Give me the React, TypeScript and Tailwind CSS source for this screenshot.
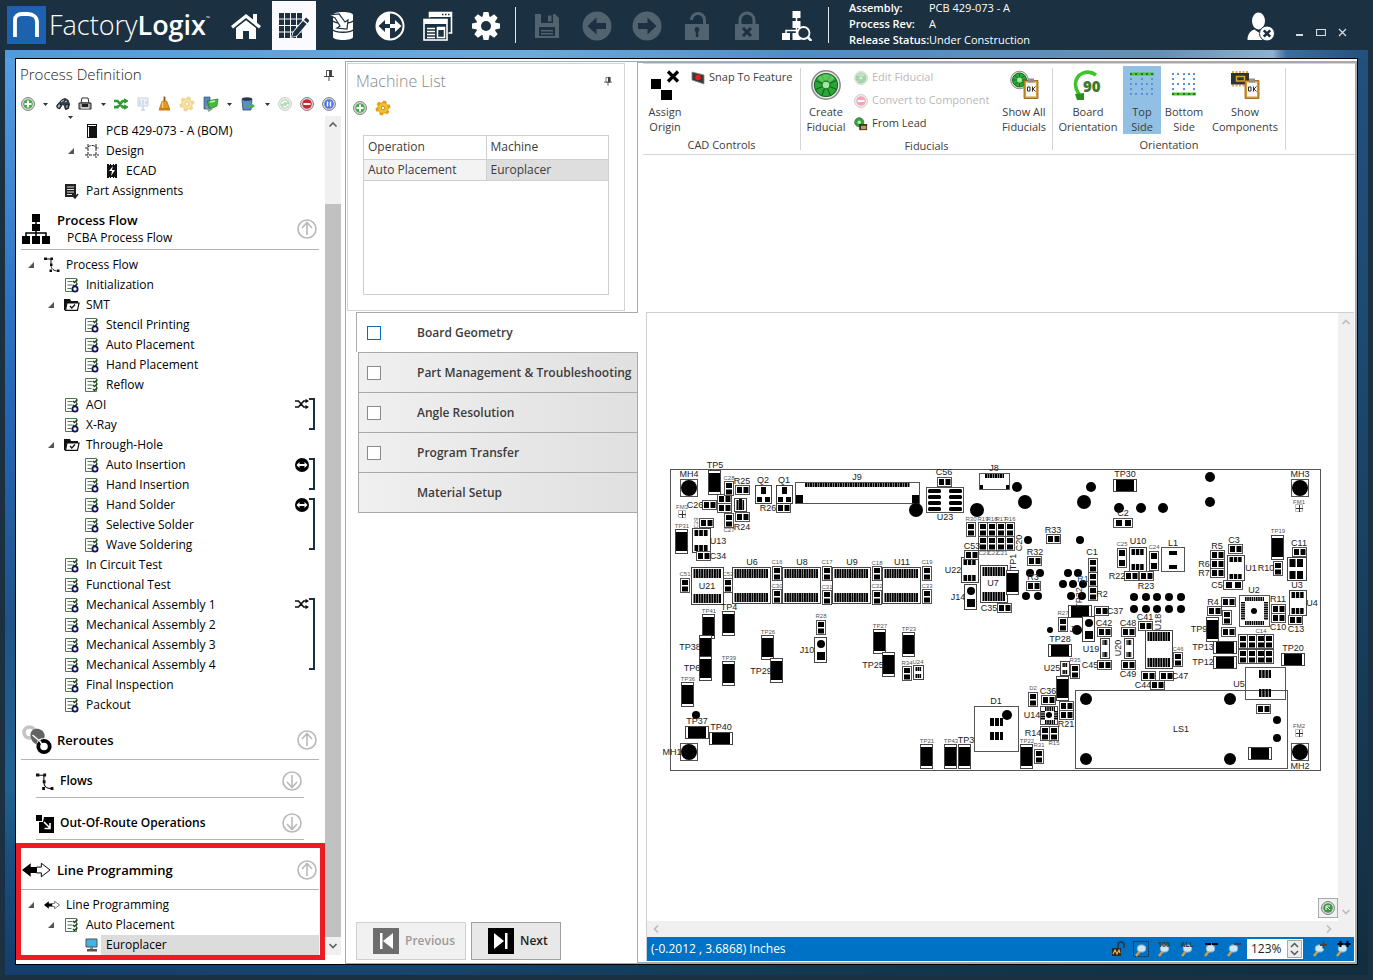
import { useState } from "react";
import type { ReactNode } from "react";

/* ---------- top bar icons ---------- */

function HomeIcon() {
  return (
    <svg viewBox="0 0 30 30" className="w-[30px] h-[30px]" fill="#fff">
      <path d="M15 3 0 15l2 2.400L15 7l13 10.400L30 15l-4-3.200V3h-4v5.600z" />
      <path d="M5 17 15 9.200 25 17v11h-7v-8h-6v8H5z" />
    </svg>
  );
}

function GridPenIcon() {
  return (
    <svg viewBox="0 0 30 28" className="w-[30px] h-[28px]" fill="#1b3040">
      {[0, 1, 2, 3].map((r) =>
        [0, 1, 2, 3].map((c) => <rect key={`${r}-${c}`} x={c * 6} y={1 + r * 6.5} width="5" height="5.500" />)
      )}
      <path d="m12 26 1.500-6L26 5l5 4-12.500 15z" fill="#fbfaff" />
      <path d="m13 25 1.500-5L24 9l3.500 3L18 23.500zM25 8l2-2.500 3.500 3-2 2.500z" />
    </svg>
  );
}

function DatabaseIcon() {
  return (
    <svg viewBox="0 0 26 30" className="w-[26px] h-[30px]">
      <path d="M4 4c0-4 20-4 20 0v22c0 4-20 4-20 0z" fill="#fff" />
      <path d="M4 10c3 3 17 3 20 0M4 19c3 3 17 3 20 0" stroke="#1b3040" strokeWidth="1.500" fill="none" />
      <path d="M0 4l10-1 6 8 3-2-1 9-10-1 3-2-5-8z" fill="#fff" stroke="#1b3040" strokeWidth="1.200" />
    </svg>
  );
}

function SwapIcon() {
  return (
    <svg viewBox="0 0 30 30" className="w-[30px] h-[30px]">
      <circle cx="15" cy="15" r="13.500" fill="none" stroke="#fff" strokeWidth="2" />
      <path d="M15 1.500a13.500 13.500 0 0 0 0 27z" fill="#fff" />
      <path d="m3.500 15 6.500-6v4h5v4h-5v4z" fill="#1b3040" />
      <path d="m26.500 15-6.500-6v4h-5v4h5v4z" fill="#fff" />
    </svg>
  );
}

function WindowsIcon() {
  return (
    <svg viewBox="0 0 30 30" className="w-[30px] h-[30px]" fill="none" stroke="#fff">
      <path d="M6.500 6.500v-5h22V22h-3" strokeWidth="1.600" />
      <path d="M6.500 4h22" strokeWidth="4" />
      <path d="M19 3.500h1.500m1.500 0h1.500m1.500 0h1.500" strokeWidth="1.500" stroke="#1b3040" />
      <rect x="1" y="8.500" width="23" height="20.500" strokeWidth="1.600" />
      <path d="M1 11h23" strokeWidth="4" />
      <path d="M4 17.500h8M4 20.500h8M4 23.500h8M4 26.500h8" strokeWidth="1.500" />
      <path d="M14.500 16.500h7v10h-7z" strokeWidth="1.500" />
      <path d="M14 17.500h8" strokeWidth="3" />
    </svg>
  );
}

function GearIcon() {
  return (
    <svg viewBox="0 0 30 30" className="w-[30px] h-[30px]">
      {[0, 45, 90, 135].map((a) => (
        <path key={a} d="M12.500 1h5l1 5v18l-1 5h-5l-1-5V6z" fill="#fff" transform={`rotate(${a} 15 15)`} />
      ))}
      <circle cx="15" cy="15" r="10" fill="#fff" />
      <circle cx="15" cy="15" r="5" fill="#1b3040" />
    </svg>
  );
}

function SaveIcon() {
  return (
    <svg viewBox="0 0 26 26" className="w-[26px] h-[26px]">
      <path d="M1 1h20l4 4v20H1z" fill="#526370" />
      <path d="M7 1h12v9H7zM5 14h16v9H5z" fill="#1b3040" />
      <path d="M14 2.500h3.500v6H14zM7 17h12v1.500H7zM7 20h12v1.500H7z" fill="#526370" />
    </svg>
  );
}

function RoundArrowIcon({ flip }: { flip?: boolean }) {
  return (
    <svg viewBox="0 0 30 30" className="w-[30px] h-[30px]">
      <circle cx="15" cy="15" r="14.500" fill="#526370" />
      <path
        d="m5.500 15 9-8.500V12H24v6h-9.500v5.500z"
        fill="#1b3040"
        transform={flip ? "rotate(180 15 15)" : undefined}
      />
    </svg>
  );
}

function PadlockIcon({ open }: { open?: boolean }) {
  return (
    <svg viewBox="0 0 26 30" className="w-[26px] h-[30px]">
      <path
        d={open ? "M7.500 9a6.500 6.500 0 0 1 13 0v5" : "M6 14V9a7 7 0 0 1 14 0v5"}
        stroke="#526370"
        strokeWidth="3"
        fill="none"
      />
      <path d="M1 13h24v16H1z" fill="#526370" />
      {open ? (
        <path d="M13 16a2.500 2.500 0 0 1 1.200 4.700V26h-2.400v-5.300A2.500 2.500 0 0 1 13 16z" fill="#1b3040" />
      ) : (
        <path d="m9 17 8 8m0-8-8 8" stroke="#1b3040" strokeWidth="3" />
      )}
    </svg>
  );
}

function SitemapSearchIcon() {
  return (
    <svg viewBox="0 0 30 30" className="w-[30px] h-[30px]">
      <path d="M10.500 0h8v7h-8zM10.500 10h8v7h-8zM0 22h8v7H0zM10.500 22h8v7h-8z" fill="#fff" />
      <path d="M14.500 5v18M4 23v-3.500h16" stroke="#fff" strokeWidth="1.500" fill="none" />
      <circle cx="21.500" cy="22" r="6" fill="#1b3040" stroke="#fff" strokeWidth="1.800" />
      <path d="m25.500 26 4 4" stroke="#fff" strokeWidth="2.500" />
    </svg>
  );
}

function UserIcon() {
  return (
    <svg viewBox="0 0 28 30" className="w-[28px] h-[30px]">
      <ellipse cx="11.500" cy="9" rx="6.500" ry="8.500" fill="#fff" />
      <path d="M.5 28c0-6 3-9.500 7-10.500l4 3 4-3c4 1 7 4 7 10.500z" fill="#fff" />
      <circle cx="20" cy="21.500" r="7.500" fill="#fff" stroke="#1b3040" strokeWidth="1" />
      <path d="m16.800 18.300 6.400 6.400m0-6.400-6.400 6.400" stroke="#1b3040" strokeWidth="2.600" />
    </svg>
  );
}

/* ---------- small coloured icons ---------- */

function Badge({ color, children, faded }: { color: string; children: ReactNode; faded?: boolean }) {
  return (
    <svg viewBox="0 0 14 14" className="w-[14px] h-[14px] shrink-0" opacity={faded ? 0.4 : 1}>
      <circle cx="7" cy="7" r="6.400" fill="#e4e4e4" stroke="#777" strokeWidth="1" />
      <circle cx="7" cy="7" r="4.800" fill={color} />
      {children}
    </svg>
  );
}

function AddBadge() {
  return (
    <Badge color="#4aab4e">
      <path d="M7 3.500v7M3.500 7h7" stroke="#fff" strokeWidth="2" />
    </Badge>
  );
}

function BinocularsIcon() {
  return (
    <svg viewBox="0 0 14 14" className="w-[14px] h-[14px]">
      <path d="M1 8 6 2.500 9 1.500l3 1.500 1.500 4-1 4.500-3 1-1-4-2-1-3 4.500L1 10z" fill="#39424a" stroke="#1b1b1b" strokeWidth="0.800" />
      <ellipse cx="3" cy="9" rx="1.800" ry="2.300" fill="#8fb0c6" stroke="#222" transform="rotate(30 3 9)" />
      <ellipse cx="10.800" cy="9.500" rx="1.600" ry="2.300" fill="#6d93ad" stroke="#222" transform="rotate(20 10.800 9.500)" />
      <path d="m5 5 3-2M9 5l2-1" stroke="#b8cbd8" />
    </svg>
  );
}

function PrinterIcon() {
  return (
    <svg viewBox="0 0 14 14" className="w-[14px] h-[14px]">
      <path d="M4 1h6l1 5H3z" fill="#fff" stroke="#333" />
      <path d="M1 6h12v6H1z" fill="#a9a9ae" stroke="#222" />
      <path d="M4 7h6v3H4z" fill="#222" />
      <path d="M3 11h8" stroke="#fff" />
    </svg>
  );
}

function ShuffleIcon({ color = "#111", wide }: { color?: string; wide?: boolean }) {
  return (
    <svg viewBox="0 0 16 12" className="w-[14px] h-[12px]" fill="none" stroke={color} strokeWidth={wide ? 3 : 1.8}>
      <path d="M0 2.500h4l6 7h3M0 9.500h4l6-7h3" />
      <path d="m12 0 4 2.500L12 5zM12 7l4 2.500-4 2.500z" fill={color} stroke={wide ? color : "none"} strokeWidth="1" />
    </svg>
  );
}

function BoardIcon() {
  return (
    <svg viewBox="0 0 14 14" className="w-[14px] h-[14px]" opacity="0.500">
      <path d="M2 1h10v8H2z" fill="#dfe8f4" stroke="#8fa6c4" />
      <path d="M4 3v5M7 3v5M10 4v3M7 9v4M5 13h4" stroke="#6d8fbb" />
    </svg>
  );
}

function BellIcon() {
  return (
    <svg viewBox="0 0 14 16" className="w-[13px] h-[16px]">
      <path d="M6 0h2v5H6z" fill="#8a5a16" />
      <path d="M4.500 5h5l1.500 4 1.500 4h-11L3 9z" fill="#e09a1c" stroke="#a4600a" strokeWidth="0.700" />
      <path d="M1 13h12v2H1z" fill="#c77d12" />
      <path d="M5 6v6" stroke="#fbe08a" />
    </svg>
  );
}

function CogIcon({ faded }: { faded?: boolean }) {
  return (
    <svg viewBox="0 0 16 16" className="w-4 h-4" opacity={faded ? 0.45 : 1}>
      {[0, 60, 120].map((a) => (
        <rect key={a} x="6" y="0.500" width="4" height="15" rx="1" fill="#e5a41a" transform={`rotate(${a + 15} 8 8)`} />
      ))}
      <circle cx="8" cy="8" r="5.400" fill="#f6c02b" stroke="#c98b10" strokeWidth="0.600" />
      <circle cx="8" cy="8" r="1.800" fill="#fff" stroke="#b57b0c" strokeWidth="0.800" />
    </svg>
  );
}

function ServerSyncIcon() {
  return (
    <svg viewBox="0 0 16 16" className="w-4 h-4">
      <path d="M1 1h6v12H1z" fill="#5d86ba" stroke="#35557f" strokeWidth="0.700" />
      <path d="m4 5 11-2-1 7-7 3z" fill="#46b93f" stroke="#1e7a1b" strokeWidth="0.700" />
      <path d="m7 6 5-1" stroke="#c9f2c4" strokeWidth="1.500" />
      <path d="M3 10l3 5 4-3" fill="none" stroke="#999" strokeWidth="1.500" />
    </svg>
  );
}

function BinIcon() {
  return (
    <svg viewBox="0 0 16 16" className="w-4 h-4">
      <path d="M2 3h10l-1 11H3z" fill="#5b8fc4" stroke="#2d4a68" strokeWidth="0.800" />
      <ellipse cx="7" cy="3" rx="5" ry="1.800" fill="#27394a" />
      <path d="M7 9h4V7l4 3-4 3v-2H7z" fill="#41b83b" />
    </svg>
  );
}

function PinIcon({ className = "w-[10px] h-[12px]" }: { className?: string }) {
  return (
    <svg viewBox="0 0 10 12" className={className}>
      <path d="M2.500 1.500h5v6h-5z" fill="#fff" stroke="#555" />
      <path d="M5 1h3v6H5zM0 7h10v1H0zM4.500 8h1v4h-1z" fill="#444" />
    </svg>
  );
}

/* ---------- tree icons ---------- */

function OperationIcon({ gear = true }: { gear?: boolean }) {
  return (
    <svg viewBox="0 0 16 16" className="w-4 h-4">
      <path d="M1.500 1.500h11v13h-11z" fill="#fff" stroke="#4d7a4d" />
      <path d="M3.500 4.500h5M3.500 8h5M3.500 11.500h4" stroke="#4d7a4d" />
      <path d="m9 4 1.500 1.500 3-3M9 8l1.500 1.500 3-3" stroke="#1d4420" strokeWidth="1.500" fill="none" />
      {gear ? (
        <circle cx="11" cy="12" r="2.600" fill="#fff" stroke="#14145e" strokeWidth="1.800" />
      ) : (
        <path d="m9 12 1.500 1.500 3-3" stroke="#1d4420" strokeWidth="1.500" fill="none" />
      )}
    </svg>
  );
}

function FolderIcon() {
  return (
    <svg viewBox="0 0 16 16" className="w-4 h-4">
      <path d="M0 2h6l1 2h7v2H3L1.500 13H0z" fill="#111" />
      <path d="M3 6h12l-1.500 7.300h-12z" fill="#fff" stroke="#111" strokeWidth="1.200" />
      <path d="m6 9 1.800 2 3.200-3.500" stroke="#111" fill="none" strokeWidth="1.300" />
    </svg>
  );
}

function FlowIcon({ className = "w-4 h-4" }: { className?: string }) {
  return (
    <svg viewBox="0 0 16 16" className={className} fill="#111">
      <path d="M1 2h6v6c0 4 3 6 7 6" fill="none" stroke="#111" />
      <path d="M0 .5h3v2.500H0zM6.500 .5H9v2.500H6.500zM6 6.500h2.500V9H6zM5.500 12.500H8V15H5.500zM13 12.500h2.500V15H13z" />
    </svg>
  );
}

function BookIcon() {
  return (
    <svg viewBox="0 0 16 16" className="w-4 h-4">
      <path d="M3 1h10v14H3z" fill="#111" />
      <path d="M4 2.500h8M4.500 4v10" stroke="#fff" />
    </svg>
  );
}

function DesignIcon() {
  return (
    <svg viewBox="0 0 16 16" className="w-4 h-4" fill="none" stroke="#222">
      <path d="M4 1v14M12 1v14M1 12h14M1 5h3" strokeDasharray="3 1" />
      <path d="M4 4c2-2 6-2 8 0v1h3" strokeDasharray="3 1" />
    </svg>
  );
}

function EcadIcon() {
  return (
    <svg viewBox="0 0 16 16" className="w-4 h-4">
      <path d="M3 1h2v1h1V1h1v1h2V1h1v1h1V1h2v14h-2v-1h-1v1H9v-1H7v1H6v-1H5v1H3z" fill="#111" />
      <path d="m9 3-4 5h3l-1 5 4-6H8z" fill="#fff" />
    </svg>
  );
}

function PartsIcon() {
  return (
    <svg viewBox="0 0 16 16" className="w-4 h-4">
      <path d="M1 1h11v13H1z" fill="#222" />
      <path d="M3 4h7M3 6.500h7M3 9h7M3 11.500h5" stroke="#ddd" />
      <path d="m9 13 2 2 3-4" stroke="#222" strokeWidth="1.500" fill="none" />
    </svg>
  );
}

function ArrowsIcon({ className = "w-4 h-4" }: { className?: string }) {
  return (
    <svg viewBox="0 0 30 16" className={className}>
      <path d="m0 8 9-7v4h6v6H9v4z" fill="#000" />
      <path d="m29 8-9-7v4h-5v6h5v4z" fill="#fff" stroke="#000" />
    </svg>
  );
}

function MachineIcon() {
  return (
    <svg viewBox="0 0 16 16" className="w-4 h-4">
      <path d="M2 2h11v8H2z" fill="#4bb0e0" stroke="#44555f" />
      <path d="M6 10h3v2H6z" fill="#888" />
      <path d="M3 12h10v2.500H3z" fill="#555" />
    </svg>
  );
}

function SitemapIcon() {
  return (
    <svg viewBox="0 0 28 30" className="w-[28px] h-[30px]">
      <path d="M10 0h8v8h-8zM10 10h8v7h-8zM0 22h8v8H0zM10 22h8v8h-8zM20 22h8v8h-8z" />
      <path d="M14 6v18M4 23v-4h20v4" fill="none" stroke="#000" strokeWidth="1.500" />
    </svg>
  );
}

function RerouteIcon() {
  return (
    <svg viewBox="0 0 30 30" className="w-[30px] h-[30px]" fill="none">
      <circle cx="7.500" cy="7.500" r="5.500" stroke="#c4c4c4" strokeWidth="3.600" />
      <path d="M8.500 11C8 4 15 2 20 5.500c2.500 2 3.500 5.500 2 8-4-1-7 2-7.500 6C11 18 9 15 8.500 11z" fill="#636363" />
      <path d="m10.500 10 7 6" stroke="#fff" strokeWidth="1.500" />
      <circle cx="22" cy="21.500" r="5.700" stroke="#000" strokeWidth="3.800" />
      <path d="m17.500 15.500 4.500 7M19 22.500l4.500 1 1-4" stroke="#fff" strokeWidth="1.500" />
    </svg>
  );
}

function OutOfRouteIcon() {
  return (
    <svg viewBox="0 0 18 18" className="w-[18px] h-[18px]">
      <path d="M0 0h6v6H0zM3 7h4l1-5h10v16H3z" />
      <path d="m8 7 6 6m0-5v5.500H8.500" stroke="#fff" strokeWidth="1.600" fill="none" />
    </svg>
  );
}

function CircleArrow({ down }: { down?: boolean }) {
  return (
    <svg viewBox="0 0 20 20" className="w-5 h-5" fill="none" stroke="#b9b9b9" strokeWidth="1.600">
      <circle cx="10" cy="10" r="9" />
      <path d="M10 16V4M5 9l5-5.500L15 9" transform={down ? "rotate(180 10 10)" : undefined} />
    </svg>
  );
}

function LoopIcon() {
  return (
    <svg viewBox="0 0 14 14" className="w-[14px] h-[14px]">
      <circle cx="7" cy="7" r="7" />
      <path d="m1.500 7 3-3v2h5V4l3 3-3 3V8h-5v2z" fill="#fff" />
    </svg>
  );
}

/* ---------- process tree ---------- */

type Link = { icon: "shuffle" | "loop"; rows: 2 | 3 | 4 };

type Node = {
  label: string;
  level: 1 | 2 | 3 | 4;
  icon: ReactNode;
  open?: boolean;
  link?: Link;
  selected?: boolean;
};

const INDENT = { 1: "pl-[7px]", 2: "pl-[27px]", 3: "pl-[47px]", 4: "pl-[67px]" };
const BRACKET = { 2: "h-[32px]", 3: "h-[52px]", 4: "h-[72px]" };

const op = <OperationIcon />;

const DOCUMENT_NODES: Node[] = [
  { label: "PCB 429-073 - A (BOM)", level: 3, icon: <BookIcon /> },
  { label: "Design", level: 3, icon: <DesignIcon />, open: true },
  { label: "ECAD", level: 4, icon: <EcadIcon /> },
  { label: "Part Assignments", level: 2, icon: <PartsIcon /> },
];

const FLOW_NODES: Node[] = [
  { label: "Process Flow", level: 1, icon: <FlowIcon />, open: true },
  { label: "Initialization", level: 2, icon: op },
  { label: "SMT", level: 2, icon: <FolderIcon />, open: true },
  { label: "Stencil Printing", level: 3, icon: op },
  { label: "Auto Placement", level: 3, icon: op },
  { label: "Hand Placement", level: 3, icon: op },
  { label: "Reflow", level: 3, icon: <OperationIcon gear={false} /> },
  { label: "AOI", level: 2, icon: op, link: { icon: "shuffle", rows: 2 } },
  { label: "X-Ray", level: 2, icon: op },
  { label: "Through-Hole", level: 2, icon: <FolderIcon />, open: true },
  { label: "Auto Insertion", level: 3, icon: op, link: { icon: "loop", rows: 2 } },
  { label: "Hand Insertion", level: 3, icon: op },
  { label: "Hand Solder", level: 3, icon: op, link: { icon: "loop", rows: 3 } },
  { label: "Selective Solder", level: 3, icon: op },
  { label: "Wave Soldering", level: 3, icon: op },
  { label: "In Circuit Test", level: 2, icon: op },
  { label: "Functional Test", level: 2, icon: op },
  { label: "Mechanical Assembly 1", level: 2, icon: op, link: { icon: "shuffle", rows: 4 } },
  { label: "Mechanical Assembly 2", level: 2, icon: op },
  { label: "Mechanical Assembly 3", level: 2, icon: op },
  { label: "Mechanical Assembly 4", level: 2, icon: op },
  { label: "Final Inspection", level: 2, icon: op },
  { label: "Packout", level: 2, icon: op },
];

const LINE_NODES: Node[] = [
  { label: "Line Programming", level: 1, icon: <ArrowsIcon />, open: true },
  { label: "Auto Placement", level: 2, icon: <OperationIcon gear={false} />, open: true },
  { label: "Europlacer", level: 3, icon: <MachineIcon />, selected: true },
];

function Tree({ nodes }: { nodes: Node[] }) {
  return (
    <ul className="pt-[5px]">
      {nodes.map((n) => (
        <li key={n.label} className={`relative flex items-center h-5 text-[12px] text-black ${INDENT[n.level]}`}>
          <span className="w-4 shrink-0">
            {n.open && (
              <svg viewBox="0 0 6 6" className="w-[6px] h-[6px]">
                <path d="M6 0v6H0z" fill="#555" />
              </svg>
            )}
          </span>
          {n.icon}
          <span className={`flex-1 ml-px pl-[5px] leading-5 whitespace-nowrap ${n.selected ? "bg-[#dcdcdc]" : ""}`}>
            {n.label}
          </span>
          {n.link && (
            <span className="absolute right-[4px] top-[3px] flex">
              {n.link.icon === "shuffle" ? <ShuffleIcon /> : <LoopIcon />}
              <span className={`w-[6px] border-y-2 border-r-2 border-[#1b3040] ${BRACKET[n.link.rows]}`} />
            </span>
          )}
        </li>
      ))}
    </ul>
  );
}

function SectionHeader({
  icon,
  title,
  subtitle,
  height,
}: {
  icon: ReactNode;
  title: string;
  subtitle?: string;
  height: string;
}) {
  return (
    <div className={`flex items-center border-b border-[#b4b4b4] text-black ${height}`}>
      <span className="w-9 flex justify-start pl-px">{icon}</span>
      <div className="flex-1">
        <h2 className="text-[13px] leading-[18px] font-semibold">{title}</h2>
        {subtitle && <p className="text-[12px] leading-[18px] pl-[10px]">{subtitle}</p>}
      </div>
      <button aria-label={`Collapse ${title}`} className="mr-[2px]">
        <CircleArrow />
      </button>
    </div>
  );
}

function SubHeader({ icon, title, height }: { icon: ReactNode; title: string; height: string }) {
  return (
    <div className={`flex items-end mx-[15px] pb-[6px] border-b border-[#b4b4b4] text-black ${height}`}>
      <span className="w-6">{icon}</span>
      <h3 className="flex-1 text-[12px] leading-5 font-semibold">{title}</h3>
      <button aria-label={`Expand ${title}`} className="mr-[2px]">
        <CircleArrow down />
      </button>
    </div>
  );
}

function Caret() {
  return (
    <svg viewBox="0 0 5 3" className="w-[5px] h-[3px]">
      <path d="M0 0h5L2.500 3z" fill="#333" />
    </svg>
  );
}

function ProcessPanel() {
  return (
    <aside className="w-[329px] shrink-0 flex flex-col pb-[9px]">
      <div className="flex justify-between items-center h-[33px] pl-1 pr-[11px] pb-[2px]">
        <h1 className="text-[15px] font-light text-[#222]">Process Definition</h1>
        <button aria-label="Pin panel">
          <PinIcon />
        </button>
      </div>
      <div className="flex items-center justify-between h-[24px] pl-[5px] pr-[9px]">
        <button aria-label="Add"><AddBadge /></button>
        <Caret />
        <button aria-label="Find"><BinocularsIcon /></button>
        <button aria-label="Print"><PrinterIcon /></button>
        <Caret />
        <button aria-label="Shuffle"><ShuffleIcon color="#2c9a2f" wide /></button>
        <button aria-label="Board"><BoardIcon /></button>
        <button aria-label="Alerts"><BellIcon /></button>
        <button aria-label="Settings"><CogIcon faded /></button>
        <button aria-label="Servers"><ServerSyncIcon /></button>
        <Caret />
        <button aria-label="Archive"><BinIcon /></button>
        <Caret />
        <button aria-label="Refresh">
          <Badge color="#4aab4e" faded>
            <path d="M4 7a3 3 0 0 1 5-2M10 7a3 3 0 0 1-5 2" stroke="#fff" strokeWidth="1.500" fill="none" />
          </Badge>
        </button>
        <button aria-label="Remove">
          <Badge color="#cf2434">
            <path d="M3.500 7h7" stroke="#fff" strokeWidth="2" />
          </Badge>
        </button>
        <button aria-label="Pause">
          <Badge color="#4a74d8">
            <path d="M5.500 4.500v5M8.500 4.500v5" stroke="#fff" strokeWidth="1.500" />
          </Badge>
        </button>
      </div>

      <div className="flex flex-1">
        <div className="flex-1 pl-[5px] pr-[6px] relative">
          <span className="absolute left-[52px] top-0">
            <Caret />
          </span>
          <Tree nodes={DOCUMENT_NODES} />
          <SectionHeader icon={<SitemapIcon />} title="Process Flow" subtitle="PCBA Process Flow" height="h-[49px] pt-[7px]" />
          <Tree nodes={FLOW_NODES} />
          <SectionHeader icon={<RerouteIcon />} title="Reroutes" height="h-[45px] pt-[5px]" />
          <SubHeader icon={<FlowIcon className="w-[18px] h-[18px]" />} title="Flows" height="h-[38px]" />
          <SubHeader icon={<OutOfRouteIcon />} title="Out-Of-Route Operations" height="h-[42px]" />
          <section className="relative -ml-[5px] -mr-[6px] pl-[5px] pr-[6px]">
            <SectionHeader
              icon={<ArrowsIcon className="w-[29px] h-[16px]" />}
              title="Line Programming"
              height="h-[50px] pt-[10px]"
            />
            <Tree nodes={LINE_NODES} />
            <div className="absolute inset-x-0 top-[3px] -bottom-[5px] border-5 border-[#ed1c24] pointer-events-none" />
          </section>
        </div>
        <div className="w-4 mr-1 bg-[#f0f0f0] flex flex-col">
          <Chevron dir="up" className="h-[17px] w-4" />
          <div className="flex-1 mt-[71px] bg-[#c1c1c1]" />
          <Chevron dir="down" className="h-[18px] w-4" />
        </div>
      </div>
    </aside>
  );
}

const CHEVRON = { up: 0, right: 90, down: 180, left: 270 };

function Chevron({ dir, className, color = "#606060" }: { dir: keyof typeof CHEVRON; className: string; color?: string }) {
  return (
    <svg viewBox="0 0 16 16" className={className}>
      <path d="m4.500 10 3.500-3.500 3.500 3.500" fill="none" stroke={color} strokeWidth="1.600" transform={`rotate(${CHEVRON[dir]} 8 8)`} />
    </svg>
  );
}

/* ---------- machine list and steps ---------- */

const STEPS = ["Part Management & Troubleshooting", "Angle Resolution", "Program Transfer"];

function MachinePanel() {
  const [checked, setChecked] = useState<Record<string, boolean>>({});
  const toggle = (s: string) => setChecked({ ...checked, [s]: !checked[s] });

  return (
    <section className="w-[293px] shrink-0 mt-[2px] flex flex-col border-l border-t border-b border-[#a9a9a9] text-[#3c3c3c]">
      <div className="border-r border-[#a9a9a9] p-px">
        <div className="w-[278px] h-[248px] border border-[#d4d4d4] px-2">
          <div className="flex justify-between items-center h-[34px] pr-1">
            <h2 className="text-[16px] font-light text-[#8a8a8a]">Machine List</h2>
            <button aria-label="Pin machine list">
              <PinIcon className="w-2 h-[10px]" />
            </button>
          </div>
          <div className="flex items-center gap-2 h-5 -ml-[3px]">
            <button aria-label="Add machine"><AddBadge /></button>
            <button aria-label="Machine settings"><CogIcon /></button>
          </div>
          <div className="mt-[17px] ml-[7px] w-[246px] h-[160px] border border-[#cfcfcf]">
            <table className="w-full text-[12px] text-left border-collapse">
              <thead>
                <tr className="h-[23px] border-b border-[#cfcfcf]">
                  <th className="w-[122px] pl-1 font-normal border-r border-[#cfcfcf]">Operation</th>
                  <th className="pl-1 font-normal">Machine</th>
                </tr>
              </thead>
              <tbody>
                <tr className="h-[21px] border-b border-[#cfcfcf]">
                  <td className="pl-1 bg-[#f3f3f3] border-r border-[#cfcfcf]">Auto Placement</td>
                  <td className="pl-1 bg-[#dedede]">Europlacer</td>
                </tr>
              </tbody>
            </table>
          </div>
        </div>
      </div>

      <div className="ml-[10px] h-10 pl-[10px] pt-px flex items-center border-t border-l border-[#a9a9a9] bg-white">
        <input
          id="step-geometry"
          type="checkbox"
          className="appearance-none shrink-0 w-[14px] h-[14px] border border-[#0a6cbf] bg-white checked:bg-[#0a6cbf]"
        />
        <label htmlFor="step-geometry" className="ml-9 text-[12px] font-semibold">
          Board Geometry
        </label>
      </div>
      {STEPS.map((s) => (
        <div
          key={s}
          className="ml-3 h-10 pl-2 pt-px flex items-center border-t border-x border-[#a9a9a9] bg-linear-to-r from-[#f0f0f0] to-[#e0e0e0]"
        >
          <input
            id={s}
            type="checkbox"
            checked={!!checked[s]}
            onChange={() => toggle(s)}
            className="appearance-none shrink-0 w-[14px] h-[14px] border border-[#8a8a8a] bg-white checked:bg-[#8a8a8a]"
          />
          <label htmlFor={s} className="ml-9 text-[12px] font-semibold whitespace-nowrap">
            {s}
          </label>
        </div>
      ))}
      <button className="ml-3 h-[41px] pl-[58px] pt-px text-left text-[12px] font-semibold border border-[#a9a9a9] bg-linear-to-r from-[#f0f0f0] to-[#e0e0e0]">
        Material Setup
      </button>

      <div className="flex-1 flex items-end gap-[5px] pl-[10px] pb-[3px] border-r border-[#a9a9a9] text-[12px] font-semibold">
        <button className="w-[110px] h-[38px] flex items-center pl-4 gap-[6px] border border-[#d0d0d0] bg-[#f1f1f1] text-[#9b9b9b]">
          <svg viewBox="0 0 26 26" className="w-[26px] h-[26px]">
            <path d="M0 0h26v26H0z" fill="#6d6d6d" />
            <path d="M7 5h2.500v16H7zM20 5v16L10 13z" fill="#fff" />
          </svg>
          Previous
        </button>
        <button className="w-[90px] h-[38px] flex items-center pl-4 gap-[6px] border border-[#a0a0a0] bg-[#e8e8e8] text-[#222]">
          <svg viewBox="0 0 26 26" className="w-[26px] h-[26px]">
            <path d="M0 0h26v26H0z" />
            <path d="M17 5h2.500v16H17zM6 5v16l10-8z" fill="#fff" />
          </svg>
          Next
        </button>
      </div>
    </section>
  );
}

/* ---------- ribbon ---------- */

function FiducialDisc({ className }: { className: string }) {
  return (
    <svg viewBox="0 0 28 28" className={className}>
      <circle cx="14" cy="14" r="13.200" fill="#e9e9e9" stroke="#8a8a8a" strokeWidth="1.400" />
      <circle cx="14" cy="14" r="10.800" fill="#2aa836" stroke="#176b20" />
      {[0, 45, 90, 135].map((a) => (
        <path key={a} d="M14 3.500v21" stroke="#12601b" strokeWidth="1" transform={`rotate(${a + 22} 14 14)`} />
      ))}
      <path d="M6 8a10 10 0 0 1 16 0l-5 4a4 4 0 0 0-6 0z" fill="#7fe07c" opacity="0.600" />
      <circle cx="14" cy="14" r="3.600" fill="#a6e6a4" stroke="#1d7a27" />
    </svg>
  );
}

function Clipboard() {
  return (
    <g>
      <path d="M14 10h14v18H14z" fill="#d79b2e" stroke="#8d5d10" strokeWidth="0.800" />
      <path d="M16 12h10v14H16z" fill="#f6f6f6" />
      <path d="M18 8h6v4h-6z" fill="#909090" />
      <path d="M17.500 16.500h2.500v4h-2.500zM22.500 16v5M25.500 16l-2.500 2.500 2.500 2.500" fill="none" stroke="#333" />
    </g>
  );
}

function DotBoard({ side }: { side: "top" | "bottom" }) {
  const rows = [2, 7, 12, 17, 22];
  return (
    <svg viewBox="0 0 26 26" className="w-[26px] h-[28px]" fill="#5a90da">
      {side === "top" ? <path d="M1 .5h24v3H1z" fill="#4cc433" /> : <path d="M1 20.500h24v3H1z" fill="#4cc433" />}
      {rows.map((y, r) =>
        [2, 7, 13, 18, 23].map((x, c) => {
          if (r % 2 === 1 && (c === 1 || c === 3)) return null;
          const pad = side === "top" ? r === 0 : r === 4;
          return <rect key={`${x}-${y}`} x={x - 1} y={y - 1} width="2" height="2" fill={pad ? "#1f7a1c" : undefined} />;
        })
      )}
    </svg>
  );
}

function BigButton({ icon, lines, active, width }: { icon: ReactNode; lines: [string, string]; active?: boolean; width: string }) {
  return (
    <button className={`h-[68px] flex flex-col items-center leading-[15px] ${width} ${active ? "bg-[#92c0e4]" : ""}`}>
      <span className="h-[38px] flex items-center">{icon}</span>
      <span className="whitespace-nowrap">{lines[0]}</span>
      <span className="whitespace-nowrap">{lines[1]}</span>
    </button>
  );
}

function SmallButton({ icon, label, disabled }: { icon: ReactNode; label: string; disabled?: boolean }) {
  return (
    <button disabled={disabled} className="flex items-center gap-1 h-[23px] whitespace-nowrap disabled:text-[#b9b9b9]">
      {icon}
      {label}
    </button>
  );
}

function RibbonGroup({ title, width, children }: { title: string; width: string; children: ReactNode }) {
  return (
    <>
      <div className={`flex flex-col pt-[2px] ${width}`}>
        <div className="flex">{children}</div>
        <div className="text-center leading-4 mt-[3px]">{title}</div>
      </div>
      <span className="w-px my-1 bg-[#d4d4d4]" />
    </>
  );
}

function Ribbon() {
  return (
    <div className="ml-[5px] h-[92px] border-y border-[#d4d4d4] flex text-[11px] text-[#3c3c3c]">
      <RibbonGroup title="CAD Controls" width="w-[157px]">
        <BigButton
          width="w-[44px]"
          lines={["Assign", "Origin"]}
          icon={
            <svg viewBox="0 0 30 30" className="w-[30px] h-[30px]">
              <path d="M1 9h10v10H1zM11 20h11v10H11z" fill="#000" />
              <path d="m18 1.500 10 10m0-10-10 10" stroke="#000" strokeWidth="3.200" />
            </svg>
          }
        />
        <div className="pl-1">
          <SmallButton
            label="Snap To Feature"
            icon={
              <svg viewBox="0 0 14 14" className="w-[14px] h-[14px]">
                <path d="M1 1l12 3v9L1 9z" fill="#3a3a3a" stroke="#888" strokeWidth="0.800" />
                <circle cx="7" cy="6.500" r="2.800" fill="#f01818" />
              </svg>
            }
          />
        </div>
      </RibbonGroup>
      <RibbonGroup title="Fiducials" width="w-[251px]">
        <BigButton width="w-[50px]" lines={["Create", "Fiducial"]} icon={<FiducialDisc className="w-[30px] h-[30px]" />} />
        <div className="pl-[3px] flex-1">
          <SmallButton
            disabled
            label="Edit Fiducial"
            icon={<span className="opacity-40"><FiducialDisc className="w-[14px] h-[14px]" /></span>}
          />
          <SmallButton
            disabled
            label="Convert to Component"
            icon={
              <Badge color="#e0244c" faded>
                <path d="M3.500 7h7" stroke="#fff" strokeWidth="2" />
              </Badge>
            }
          />
          <SmallButton
            label="From Lead"
            icon={
              <svg viewBox="0 0 16 16" className="w-[14px] h-4 shrink-0">
                <circle cx="6" cy="6" r="5.200" fill="#2aa836" stroke="#666" />
                <circle cx="6" cy="6" r="2" fill="#b8edb6" />
                <path d="M6 8h9v7H6z" fill="#333" />
                <path d="M8 10h6v4H8z" fill="#c79c35" />
              </svg>
            }
          />
        </div>
        <BigButton
          width="w-[56px]"
          lines={["Show All", "Fiducials"]}
          icon={
            <svg viewBox="0 0 29 29" className="w-[29px] h-[30px]">
              <circle cx="9.500" cy="9.500" r="8.800" fill="#e4e4e4" stroke="#888" />
              <circle cx="9.500" cy="9.500" r="7" fill="#2aa836" stroke="#176b20" />
              <path d="M9.500 3v13M3 9.500h13M5 5l9 9M14 5l-9 9" stroke="#12601b" strokeWidth="0.800" />
              <circle cx="9.500" cy="9.500" r="2.500" fill="#a6e6a4" />
              <Clipboard />
            </svg>
          }
        />
      </RibbonGroup>
      <RibbonGroup title="Orientation" width="w-[232px]">
        <BigButton
          width="w-[70px]"
          lines={["Board", "Orientation"]}
          icon={
            <svg viewBox="0 0 30 30" className="w-[30px] h-[30px]">
              <path d="M23 5C15-1 3 3 2.500 14c0 5 2 8 4 11" fill="none" stroke="#3fc32f" strokeWidth="3.600" />
              <path d="m2 24 9-1v7H4z" fill="#2b8f20" />
              <text x="10" y="21.500" fontSize="15" fontWeight="800" fill="#3c7a2e" fontFamily="Open Sans, sans-serif">
                90
              </text>
            </svg>
          }
        />
        <BigButton width="w-[38px]" active lines={["Top", "Side"]} icon={<DotBoard side="top" />} />
        <BigButton width="w-[46px]" lines={["Bottom", "Side"]} icon={<DotBoard side="bottom" />} />
        <BigButton
          width="w-[76px]"
          lines={["Show", "Components"]}
          icon={
            <svg viewBox="0 0 29 29" className="w-[29px] h-[30px]">
              <path d="M1 1.500h17M1 15h13" stroke="#e0b02c" strokeWidth="2" strokeDasharray="2 1.500" />
              <path d="M0 2.500h18v11.500H0z" fill="#2e3338" />
              <path d="M5.500 6h8v4.500h-8z" fill="none" stroke="#d6a429" strokeWidth="1.500" />
              <Clipboard />
            </svg>
          }
        />
      </RibbonGroup>
    </div>
  );
}

/* ---------- board drawing ---------- */

type P = [number, number];

const H_CHIPS: P[] = [
  [709, 505], [742, 490], [742, 517], [706, 523], [703, 556], [783, 508], [944, 482], [971, 555], [724, 499], [724, 508],
  [1053, 539], [1034, 561], [1033, 586], [1131, 576], [1146, 576], [1217, 555], [1217, 564], [1217, 573], [1235, 549],
  [1299, 552], [1214, 611], [1228, 602], [1278, 609], [1278, 618], [1295, 620], [1101, 611], [1004, 608], [1145, 626],
  [1104, 632], [1128, 632], [1104, 665], [1128, 665], [1048, 700], [1066, 706], [1066, 715], [1148, 676], [1166, 676],
  [1157, 685], [1263, 709], [1228, 632],
];

const V_CHIPS: P[] = [
  [729, 488], [729, 520], [685, 585], [728, 585], [777, 573], [777, 596], [827, 573], [827, 597], [877, 573], [877, 597],
  [927, 573], [927, 596], [971, 529], [983, 529], [992, 529], [1001, 529], [1010, 529], [983, 543], [992, 543], [1001, 543],
  [1010, 543], [821, 627], [907, 673], [1093, 565], [1093, 579], [1093, 593], [1278, 568], [1063, 624], [1227, 617],
  [1178, 659], [1075, 671], [1033, 699], [1045, 733], [1054, 733], [1039, 756], [1243, 641], [1252, 641], [1261, 641],
  [1269, 641], [1243, 656], [1252, 656], [1261, 656], [1269, 656],
];

const H_BIG: P[] = [[1123, 523], [1233, 585]];
const V_BIG: P[] = [[1122, 558], [1154, 561]];

const V_PADS: P[] = [
  [715, 482], [682, 541], [709, 626], [729, 623], [706, 647], [706, 668], [729, 673], [688, 694], [768, 647], [777, 670],
  [880, 641], [889, 664], [909, 644], [927, 756], [951, 756], [965, 756], [1013, 582], [1278, 547], [1213, 629],
  [1063, 688], [1027, 756],
];

const H_PADS: P[] = [
  [697, 732], [721, 738], [1125, 485], [1080, 611], [1060, 650], [1225, 647], [1225, 662], [1293, 659], [1260, 753],
];

const HOLES: [number, number, number][] = [
  [696, 715, 4], [916, 510, 7], [977, 510, 7], [1017, 487, 5], [1091, 487, 5], [1025, 502, 7], [1084, 502, 7],
  [1119, 508, 5], [1141, 508, 5], [1163, 508, 5], [1210, 477, 5], [1210, 502, 5], [1028, 540, 4], [1080, 540, 4],
  [1030, 573, 4], [1040, 573, 4], [1026, 596, 4], [1038, 596, 4], [1068, 573, 4], [1078, 573, 4], [1063, 584, 4],
  [1073, 584, 4], [1083, 584, 4], [1071, 596, 4], [1082, 596, 4], [1050, 630, 3], [1077, 630, 5], [1007, 715, 5],
  [1086, 699, 6], [1230, 699, 6], [1086, 759, 6], [1230, 759, 6], [1277, 720, 4], [1277, 738, 4], [1254, 611, 3],
  ...[1134, 1146, 1157, 1169, 1181].flatMap((x): [number, number, number][] => [[x, 597, 4], [x, 609, 4]]),
];

// x, y, width, height, pins per row, pin row depth
const CHIPS: [number, number, number, number, number, number][] = [
  [732, 567, 38, 36, 14, 9], [782, 567, 38, 36, 14, 9], [832, 567, 38, 36, 14, 9], [882, 567, 38, 36, 14, 9],
  [691, 567, 32, 37, 11, 9], [980, 565, 27, 37, 9, 9], [692, 528, 18, 24, 3, 6], [961, 557, 17, 25, 3, 6],
  [1129, 547, 17, 24, 3, 6], [1289, 590, 17, 25, 3, 6], [1145, 630, 27, 38, 9, 9], [1100, 638, 9, 20, 4, 5],
  [1124, 638, 9, 20, 4, 5], [1227, 555, 17, 25, 3, 5], [734, 498, 12, 13, 4, 5], [913, 665, 10, 14, 3, 4],
  [1060, 661, 9, 14, 3, 4], [1287, 557, 19, 23, 2, 8],
];

const MOUNTS: P[] = [[689, 488], [689, 752], [1300, 488], [1300, 752]];
const MARKS: P[] = [[682, 514], [1299, 508], [1299, 733]];
const CONNECTORS: P[] = [[821, 650], [971, 597], [1089, 629]];
const TRANSISTORS: P[] = [[763, 494], [784, 494]];

const LABELS: [string, number, number][] = [
  ["MH4", 689, 474], ["TP5", 715, 465], ["R25", 742, 481], ["C26", 695, 505], ["R24", 742, 527], ["Q2", 763, 480],
  ["Q1", 784, 480], ["R26", 768, 508], ["J9", 857, 477], ["C56", 944, 472], ["U23", 945, 517], ["J8", 994, 468],
  ["U13", 718, 541], ["C34", 718, 556], ["U6", 752, 562], ["U8", 802, 562], ["U9", 852, 562], ["U11", 902, 562],
  ["U21", 707, 586], ["TP4", 729, 607], ["C53", 972, 546], ["U22", 953, 570], ["U7", 993, 583], ["J14", 958, 597],
  ["C35", 989, 608], ["TP38", 690, 647], ["TP6", 692, 668], ["TP29", 761, 671], ["J10", 807, 650], ["TP25", 873, 665],
  ["TP37", 697, 721], ["TP40", 721, 727], ["MH1", 672, 752], ["TP3", 966, 740], ["D1", 996, 701], ["TP30", 1125, 474],
  ["MH3", 1300, 474], ["C2", 1123, 513], ["R33", 1053, 530], ["R32", 1035, 552], ["R3", 1033, 577], ["C1", 1092, 552],
  ["R2", 1102, 594], ["C37", 1115, 611], ["U10", 1138, 541], ["L1", 1173, 543], ["R22", 1117, 576], ["R23", 1146, 586],
  ["R5", 1217, 546], ["C3", 1234, 540], ["R6", 1204, 564], ["R7", 1204, 573], ["U1", 1251, 568], ["R10", 1266, 568],
  ["C11", 1299, 543], ["C5", 1217, 585], ["U2", 1254, 590], ["U3", 1297, 585], ["R4", 1213, 602], ["R11", 1278, 599],
  ["U4", 1312, 603], ["C10", 1278, 627], ["C13", 1296, 629], ["C42", 1104, 623], ["C48", 1128, 623], ["C41", 1145, 617],
  ["U19", 1091, 649], ["C45", 1090, 665], ["C49", 1128, 674], ["C47", 1180, 676], ["C44", 1143, 685], ["TP28", 1060, 639],
  ["U25", 1052, 668], ["TP9", 1199, 629], ["TP13", 1203, 647], ["TP12", 1203, 662], ["TP20", 1293, 648], ["U5", 1239, 684],
  ["C36", 1048, 691], ["U14", 1032, 715], ["R21", 1066, 724], ["R14", 1033, 733], ["LS1", 1181, 729], ["MH2", 1300, 766],
  ["J", 1072, 629],
];

const SMALL_LABELS: [string, number, number][] = [
  ["C28", 729, 478], ["C27", 729, 530], ["TP31", 682, 526], ["C51", 685, 574], ["C52", 728, 574], ["C16", 777, 562],
  ["C30", 777, 586], ["C17", 827, 562], ["C31", 827, 587], ["C18", 877, 563], ["C32", 877, 586], ["C19", 927, 562],
  ["C33", 927, 586], ["R30", 971, 519], ["R19", 983, 519], ["R18", 992, 519], ["R17", 1001, 519], ["R16", 1010, 519],
  ["C23", 984, 553], ["C22", 993, 553], ["C21", 1002, 553], ["TP41", 709, 611], ["TP39", 729, 658], ["TP36", 688, 679],
  ["TP26", 768, 632], ["R28", 821, 616], ["TP27", 880, 626], ["TP23", 909, 629], ["R34", 907, 663], ["U24", 918, 662],
  ["TP21", 927, 741], ["TP43", 951, 741], ["TP22", 1027, 741], ["R31", 1039, 745], ["R15", 1054, 743], ["D2", 1033, 688],
  ["C25", 1122, 544], ["C24", 1154, 547], ["TP19", 1278, 531], ["R27", 1063, 613], ["R35", 1075, 660], ["C46", 1178, 649],
  ["C14", 1261, 631], ["FM3", 682, 507], ["FM1", 1299, 502], ["FM2", 1299, 726],
];

// text, x, y: labels turned to run upwards
const UP_LABELS: [string, number, number][] = [
  ["C20", 1019, 543], ["TP1", 1013, 562], ["U18", 1158, 622], ["U20", 1118, 648], ["TP32", 1079, 598],
];

function BoardDrawing() {
  return (
    <svg
      viewBox="662 460 662 314"
      className="w-[662px] max-w-full"
      fontFamily="Liberation Sans, Arial, sans-serif"
      aria-label="Board layout"
    >
      <g fill="none" stroke="#555">
        <rect x="670.500" y="469.500" width="650" height="301" />
        <rect x="1075.500" y="690.500" width="212" height="78" />
        <rect x="974.500" y="706.500" width="44" height="45" />
        <rect x="795.500" y="482.500" width="124" height="21" />
        <rect x="926.500" y="487.500" width="37" height="25" />
        <rect x="979.500" y="473.500" width="30" height="16" />
        <rect x="1161.500" y="547.500" width="23" height="24" />
        <rect x="1239.500" y="595.500" width="30" height="31" />
        <rect x="1245.500" y="667.500" width="40" height="32" />
        <rect x="1040.500" y="706.500" width="17" height="18" />
      </g>

      {CHIPS.map(([x, y, w, h, pins, depth]) => {
        const step = (w - 4) / pins;
        return (
          <g key={`${x}-${y}`}>
            <rect x={x + 0.5} y={y + 0.5} width={w} height={h} fill="#fff" stroke="#444" />
            {Array.from({ length: pins }, (_, i) => (
              <g key={i}>
                <rect x={x + 2.5 + i * step} y={y + 2} width={step * 0.8} height={depth} />
                <rect x={x + 2.5 + i * step} y={y + h - depth - 1} width={step * 0.8} height={depth} />
              </g>
            ))}
          </g>
        );
      })}
      <path d="M739 499h3v11h-3z" />

      {H_CHIPS.map(([x, y]) => (
        <g key={`${x}-${y}`}>
          <rect x={x - 6.5} y={y - 4.5} width="14" height="9" fill="#fff" stroke="#555" />
          <rect x={x - 5} y={y - 3} width="5" height="6" />
          <rect x={x + 1.5} y={y - 3} width="5" height="6" />
        </g>
      ))}
      {V_CHIPS.map(([x, y]) => (
        <g key={`${x}-${y}`}>
          <rect x={x - 4.5} y={y - 6.5} width="9" height="14" fill="#fff" stroke="#555" />
          <rect x={x - 3} y={y - 5} width="6" height="5" />
          <rect x={x - 3} y={y + 1.5} width="6" height="5" />
        </g>
      ))}
      {H_BIG.map(([x, y]) => (
        <g key={`${x}-${y}`}>
          <rect x={x - 9.5} y={y - 4.5} width="19" height="9" fill="#fff" stroke="#555" />
          <path d={`M${x - 7} ${y - 3}h6v6h-6zM${x + 2} ${y - 3}h6v6h-6z`} />
        </g>
      ))}
      {V_BIG.map(([x, y]) => (
        <g key={`${x}-${y}`}>
          <rect x={x - 4.5} y={y - 9.5} width="9" height="19" fill="#fff" stroke="#555" />
          <path d={`M${x - 3} ${y - 8}h6v6h-6zM${x - 3} ${y + 2}h6v6h-6z`} />
        </g>
      ))}
      {V_PADS.map(([x, y]) => (
        <g key={`${x}-${y}`}>
          <rect x={x - 6.5} y={y - 11.5} width="12" height="24" fill="#fff" stroke="#444" />
          <rect x={x - 6} y={y - 9} width="11" height="19" />
        </g>
      ))}
      {H_PADS.map(([x, y]) => (
        <g key={`${x}-${y}`}>
          <rect x={x - 11.5} y={y - 5.5} width="23" height="12" fill="#fff" stroke="#444" />
          <rect x={x - 9} y={y - 5} width="18" height="11" />
        </g>
      ))}
      {MOUNTS.map(([x, y]) => (
        <g key={`${x}-${y}`}>
          <rect x={x - 8.5} y={y - 8.5} width="17" height="17" fill="none" stroke="#555" />
          <circle cx={x} cy={y} r="8" />
        </g>
      ))}
      {MARKS.map(([x, y]) => (
        <g key={`${x}-${y}`} fill="none">
          <path d={`M${x - 3.5} ${y - 3.5}h7v7h-7z`} stroke="#bbb" />
          <path d={`M${x + 0.5} ${y - 3}v7M${x - 3} ${y + 0.5}h7`} stroke="#333" />
        </g>
      ))}
      {CONNECTORS.map(([x, y]) => (
        <g key={`${x}-${y}`}>
          <rect x={x - 6.5} y={y - 12.5} width="12" height="25" fill="#fff" stroke="#444" />
          <circle cx={x} cy={y - 6} r="4" />
          <rect x={x - 4} y={y + 2} width="8" height="8" />
        </g>
      ))}
      {TRANSISTORS.map(([x, y]) => (
        <g key={`${x}-${y}`}>
          <rect x={x - 7.5} y={y - 8.5} width="16" height="18" fill="#fff" stroke="#444" />
          <path d={`M${x - 2} ${y - 7}h5v7h-5zM${x - 6} ${y + 3}h5v5h-5zM${x + 2} ${y + 3}h5v5h-5z`} />
        </g>
      ))}

      {/* edge connectors */}
      <path d="M805 485h105M985 476h19" stroke="#000" strokeWidth="4" strokeDasharray="2 0.500" />
      <path d="M796 495h7v8h-7zM912 495h7v8h-7zM980 485h3v4h-3zM1006 485h3v4h-3z" />

      {/* U23 pads */}
      {[491, 497, 503, 509].map((y) => (
        <g key={y}>
          <rect x="928" y={y - 2} width="13" height="4" rx="1.500" />
          <rect x="949" y={y - 2} width="13" height="4" rx="1.500" />
        </g>
      ))}

      {/* quad packages */}
      <g stroke="#000" strokeDasharray="1.600 0.600">
        <path d="M1245 599h19M1245 623h19M1243 602v18M1266 602v18" strokeWidth="4" />
        <path d="M1045 709h10M1045 722h10M1043 711v9M1056 711v9" strokeWidth="4" />
      </g>
      <circle cx="1049" cy="715" r="3" />

      {/* D1, U5 and L1 pins */}
      <path d="M990 718h4v8h-4zM995 718h4v8h-4zM1000 718h3v8h-3zM990 732h4v8h-4zM995 732h4v8h-4zM1000 732h3v8h-3z" />
      <path d="M1259 674h12M1259 693h12" stroke="#000" strokeWidth="8" strokeDasharray="2.500 0.700" />
      <path d="M1169 551h8v4h-8zM1169 565h8v4h-8z" />

      {HOLES.map(([x, y, r]) => (
        <circle key={`${x}-${y}`} cx={x} cy={y} r={r} />
      ))}

      <g textAnchor="middle" fill="#222">
        <g fontSize="9">
          {LABELS.map(([t, x, y]) => (
            <text key={t} x={x} y={y + 3}>{t}</text>
          ))}
          {UP_LABELS.map(([t, x, y]) => (
            <text key={t} transform={`translate(${x + 3} ${y}) rotate(-90)`}>{t}</text>
          ))}
          <text x="1083" y="582" fill="#1d4f80">R1</text>
        </g>
        <g fontSize="6" fill="#555">
          {SMALL_LABELS.map(([t, x, y]) => (
            <text key={t} x={x} y={y + 2}>{t}</text>
          ))}
          <text transform="translate(698 523) rotate(-90)">C29</text>
        </g>
      </g>
    </svg>
  );
}

/* ---------- canvas and status bar ---------- */

const ZOOM_MARKS = {
  minus: "M10 5h7",
  minusMinus: "M4 5h6M11 5h6",
  plus: "M10 6h7M13.500 2.500v7",
  plusPlus: "M4.500 5h6M7.500 2v6M11.500 5h6M14.500 2v6",
};

function Magnifier({ mark, text, framed }: { mark?: keyof typeof ZOOM_MARKS; text?: string; framed?: boolean }) {
  const dark = mark === "minusMinus" || mark === "plusPlus";
  return (
    <svg viewBox="0 0 18 20" className="w-[18px] h-5">
      {framed && <path d="M1.500 2.500h15v15h-15z" fill="none" stroke="#1a2f48" strokeDasharray="2 1" />}
      <path d="m8 12-4 5" stroke="#c9a04a" strokeWidth="2.600" />
      <ellipse cx="9.500" cy="9.500" rx="4.200" ry="3.600" fill="#cfe6f5" stroke="#8fb4cf" />
      {mark && <path d={ZOOM_MARKS[mark]} stroke={dark ? "#000" : "#3c4650"} strokeWidth="2" />}
      {text && (
        <text x="9" y="8" fontSize="7" fontWeight="700" textAnchor="middle" fill="#2f3b46">
          {text}
        </text>
      )}
    </svg>
  );
}

function StatusBar() {
  const [zoom, setZoom] = useState(123);
  return (
    <footer className="h-6 bg-[#0072c6] flex items-center justify-between pl-1 pr-[3px] text-white text-[12px]">
      <span>(-0.2012 , 3.6868) Inches</span>
      <div className="flex items-center gap-[5px]">
        <button aria-label="Unlock view" className="mr-[2px]">
          <svg viewBox="0 0 14 16" className="w-[14px] h-4">
            <path d="M7 7V4a3 3 0 0 1 6 0v3" fill="none" stroke="#333" strokeWidth="1.600" />
            <path d="M1 7h9v8H1z" fill="#2a2a2a" />
            <path d="m2 13 2-4 2 4 2-4 1 3" fill="none" stroke="#e8b53a" strokeWidth="1.200" />
          </svg>
        </button>
        <button aria-label="Zoom window"><Magnifier framed /></button>
        <button aria-label="Zoom to 100"><Magnifier text="100" /></button>
        <button aria-label="Zoom all"><Magnifier text="ALL" /></button>
        <button aria-label="Zoom far out" onClick={() => setZoom(zoom - 20)}><Magnifier mark="minusMinus" /></button>
        <button aria-label="Zoom out" onClick={() => setZoom(zoom - 5)}><Magnifier mark="minus" /></button>
        <div className="flex h-5 w-[56px] mr-[2px] bg-white p-px">
          <input
            aria-label="Zoom level"
            value={`${zoom}%`}
            onChange={(e) => setZoom(parseInt(e.target.value, 10) || 0)}
            className="w-[39px] pl-[3px] text-[12px] text-[#222] outline-none"
          />
          <span className="w-[15px] border border-[#aaa] bg-[#ececec] flex flex-col items-center justify-center">
            <button aria-label="Increase zoom" className="h-2 flex" onClick={() => setZoom(zoom + 1)}>
              <svg viewBox="0 0 9 8" className="w-[9px] h-2"><path d="m1 6 3.500-3.500L8 6" fill="none" stroke="#555" strokeWidth="1.500" /></svg>
            </button>
            <button aria-label="Decrease zoom" className="h-2 flex" onClick={() => setZoom(zoom - 1)}>
              <svg viewBox="0 0 9 8" className="w-[9px] h-2"><path d="m1 2 3.500 3.500L8 2" fill="none" stroke="#555" strokeWidth="1.500" /></svg>
            </button>
          </span>
        </div>
        <button aria-label="Zoom in" onClick={() => setZoom(zoom + 5)}><Magnifier mark="plus" /></button>
        <button aria-label="Zoom far in" onClick={() => setZoom(zoom + 20)}><Magnifier mark="plusPlus" /></button>
      </div>
    </footer>
  );
}

function BoardPanel() {
  return (
    <main className="flex-1 min-w-0 mt-[2px] flex flex-col border-y-2 border-r-2 border-[#a9a9a9]">
      <Ribbon />
      <div className="flex-1 mt-[157px] ml-2 mr-px mb-px flex flex-col border-t border-l border-[#d0d0d0]">
        <div className="flex-1 flex">
          <div className="relative flex-1 flex items-center justify-center">
            <BoardDrawing />
            <button
              aria-label="Fit board"
              className="absolute right-0 bottom-[3px] w-5 h-5 flex items-center justify-center border border-[#aaa] bg-[#f0f0f0]"
            >
              <Badge color="#3f9a45">
                <path d="M5 9V5h4M5.500 5.500 9 9" stroke="#fff" fill="none" />
              </Badge>
            </button>
          </div>
          <div className="w-4 bg-[#f0f0f0] flex flex-col justify-between">
            <Chevron dir="up" className="w-4 h-[18px]" color="#bcbcbc" />
            <Chevron dir="down" className="w-4 h-[18px]" color="#bcbcbc" />
          </div>
        </div>
        <div className="h-4 pr-4 bg-[#f0f0f0] flex justify-between">
          <Chevron dir="left" className="w-[18px] h-4" color="#bcbcbc" />
          <Chevron dir="right" className="w-[18px] h-4" color="#bcbcbc" />
        </div>
        <StatusBar />
      </div>
    </main>
  );
}

/* ---------- shell ---------- */

function NavButton({ label, active, wide, children }: { label: string; active?: boolean; wide?: boolean; children: ReactNode }) {
  return (
    <button aria-label={label} className={`h-[50px] flex items-center justify-center ${wide ? "w-[50px]" : "w-[48px]"}`}>
      <span className={`h-[49px] w-[44px] mt-px flex items-center justify-center ${active ? "bg-[#fbfaff]" : ""}`}>{children}</span>
    </button>
  );
}

function TopBar() {
  return (
    <header className="h-[50px] flex items-center text-white">
      <a href="#" className="flex items-center w-[222px] shrink-0 pl-[7px]">
        <svg viewBox="0 0 39 38" className="w-[39px] h-[38px] shrink-0">
          <path d="M0 0h39v38H0z" fill="#1d62ae" />
          <path d="M8 31V14c0-4 3-6 7-6h6c5 0 9 3 9 8v15" fill="none" stroke="#fff" strokeWidth="3.800" />
        </svg>
        <span className="ml-[3px] text-[27px] leading-8 font-light">
          Factory<span className="font-semibold">Logix</span>
        </span>
        <span className="text-[5px] leading-2 self-start mt-2">™</span>
      </a>
      <nav className="flex items-center">
        <NavButton label="Home"><HomeIcon /></NavButton>
        <NavButton label="Process definition" active><GridPenIcon /></NavButton>
        <NavButton label="Data import"><DatabaseIcon /></NavButton>
        <NavButton label="Transfer"><SwapIcon /></NavButton>
        <NavButton label="Windows"><WindowsIcon /></NavButton>
        <NavButton label="Settings"><GearIcon /></NavButton>
        <span className="ml-[5px] mr-[6px] w-px h-9 bg-[#e3e8eb]" />
        <NavButton label="Save" wide><SaveIcon /></NavButton>
        <NavButton label="Back" wide><RoundArrowIcon /></NavButton>
        <NavButton label="Forward" wide><RoundArrowIcon flip /></NavButton>
        <NavButton label="Unlock" wide><PadlockIcon open /></NavButton>
        <NavButton label="Lock" wide><PadlockIcon /></NavButton>
        <NavButton label="Find in flow" wide><SitemapSearchIcon /></NavButton>
        <span className="ml-[6px] w-px h-9 bg-[#e3e8eb]" />
      </nav>
      <dl className="ml-5 pb-[2px] grid grid-cols-[80px_auto] text-[11px] leading-4 whitespace-nowrap">
        <dt className="font-semibold">Assembly:</dt>
        <dd>PCB 429-073 - A</dd>
        <dt className="font-semibold">Process Rev:</dt>
        <dd>A</dd>
        <dt className="font-semibold">Release Status:</dt>
        <dd>Under Construction</dd>
      </dl>
      <div className="ml-auto flex items-center pr-[26px]">
        <button aria-label="Sign out" className="mr-5 mt-1"><UserIcon /></button>
        <div className="flex items-center gap-3 pt-[14px]">
          <button aria-label="Minimize">
            <svg viewBox="0 0 9 9" className="w-[9px] h-[9px]"><path d="M1 7h7" stroke="#d5dade" strokeWidth="2" /></svg>
          </button>
          <button aria-label="Maximize">
            <svg viewBox="0 0 10 9" className="w-[10px] h-[9px]"><path d="M.5 1.500h9v6h-9zM0 1.500h10" fill="none" stroke="#d5dade" strokeWidth="1.200" /></svg>
          </button>
          <button aria-label="Close">
            <svg viewBox="0 0 9 9" className="w-[9px] h-[9px]"><path d="m1 1 7 7m0-7-7 7" stroke="#d5dade" strokeWidth="1.300" /></svg>
          </button>
        </div>
      </div>
    </header>
  );
}

export default function App() {
  return (
    <div className="min-h-screen flex flex-col bg-[#1b3040] font-['Open_Sans','Noto_Sans',sans-serif]">
      <TopBar />
      <div className="flex-1 flex flex-col mx-[5px] mb-[5px]">
        <div className="h-2 bg-[linear-gradient(to_right,#4f9ade_0%,#6dabdb_38%,#4f8dc8_58%,#6690b3_85%,#90b1cf_93%,#3b6f9f_94%,#234f7c_100%)]" />
        <div className="flex-1 flex">
          <div className="w-[10px] bg-[linear-gradient(to_bottom,#559fe0_0%,#2f76c6_25%,#2566b6_38%,#1e5488_62%,#206392_80%,#19507f_88%,#143f6c_100%)]" />
          <div className="flex-1 min-w-0 flex bg-white border border-black">
            <ProcessPanel />
            <MachinePanel />
            <BoardPanel />
          </div>
          <div className="w-[10px] bg-[linear-gradient(to_bottom,#234f7c_0%,#1d4a72_30%,#173f5e_60%,#112e40_100%)]" />
        </div>
        <div className="h-[10px] bg-[linear-gradient(to_right,#143f6c_0%,#17446c_30%,#12384f_60%,#112e40_100%)]" />
      </div>
    </div>
  );
}
